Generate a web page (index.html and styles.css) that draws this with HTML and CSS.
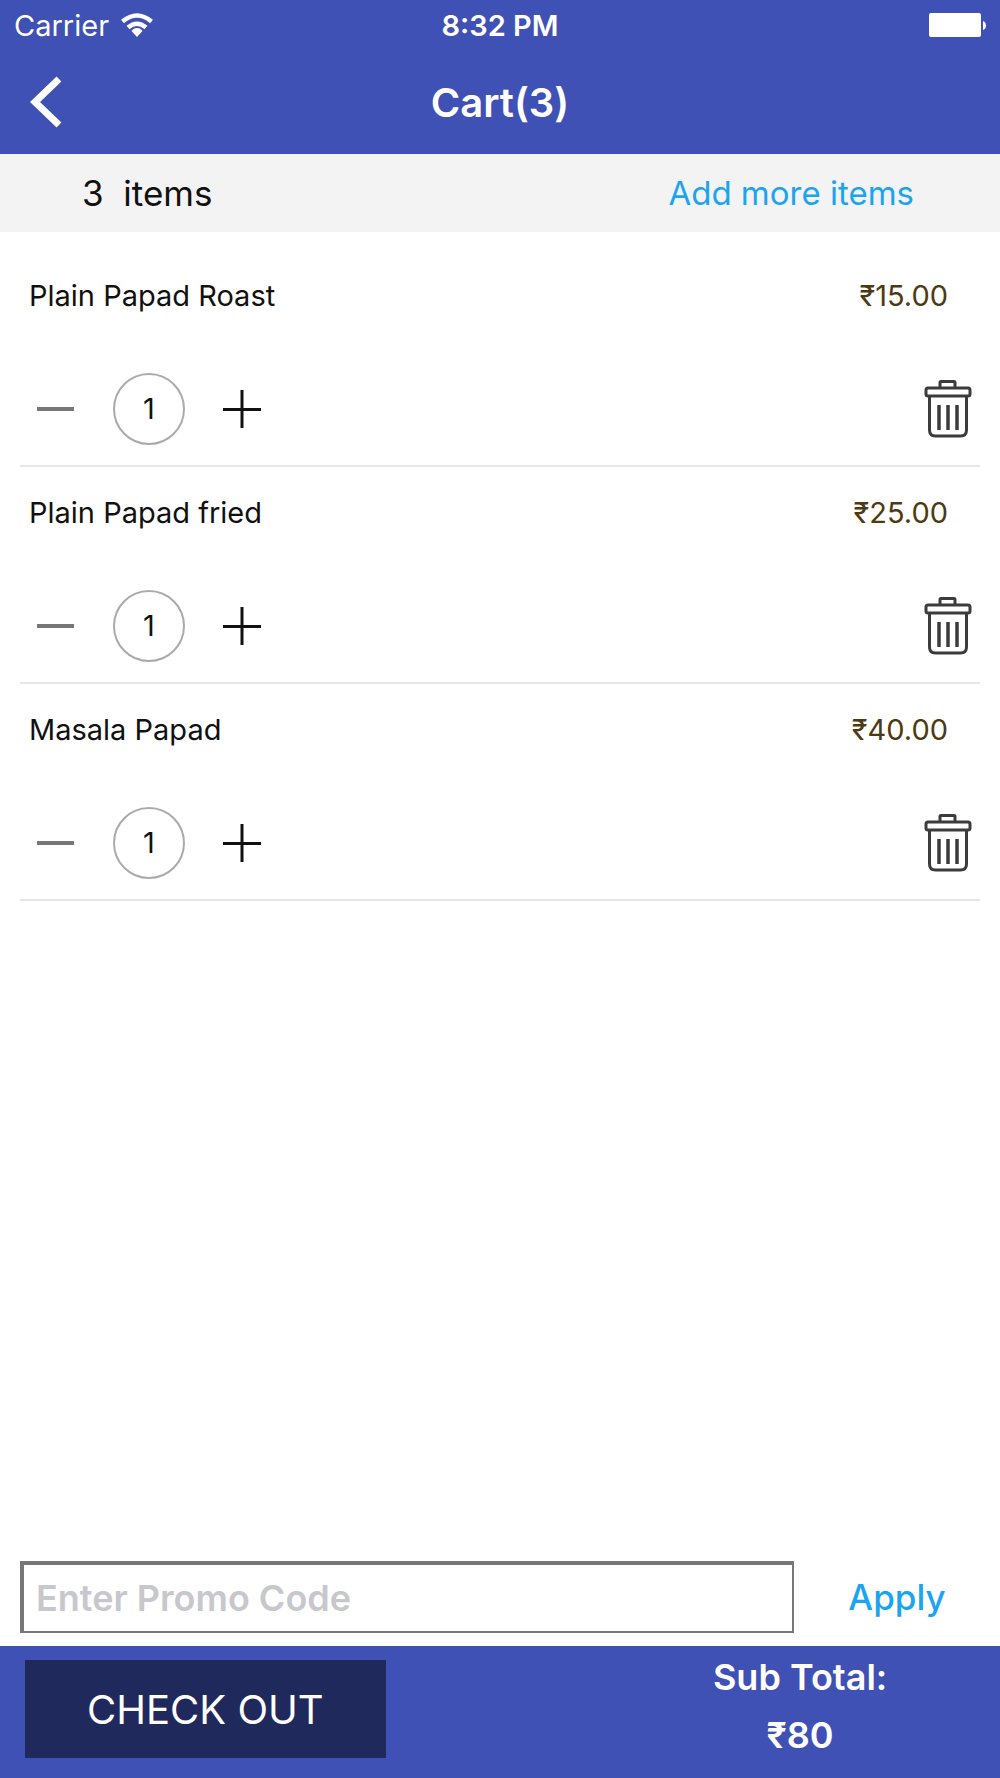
FILE: index.html
```html
<!DOCTYPE html>
<html lang="en">
<head>
  <meta charset="UTF-8">
  <meta name="viewport" content="width=device-width, initial-scale=1.0">
  <title>Cart</title>
  <link rel="stylesheet" href="styles.css">
</head>
<body>

  <!-- Trash icon shared by all cart rows -->
  <svg class="icon-defs" aria-hidden="true">
    <symbol id="trash" viewBox="0 0 48 60">
      <g fill="none" stroke="#3c3c3c" stroke-width="3">
        <path d="M16 9V3.500Q16 2.500 17 2.500H30Q31 2.500 31 3.500V9"/>
        <rect x="2" y="9" width="44" height="8" rx="2"/>
        <path d="M5.500 17V51Q5.500 57 11.500 57H36.500Q42.500 57 42.500 51V17"/>
        <path d="M15 26V51M24 26V51M33 26V51" stroke-width="3.500"/>
      </g>
    </symbol>
  </svg>

  <header class="header">
    <div class="status-bar">
      <div class="carrier">
        <span>Carrier</span>
        <svg class="wifi" viewBox="0 0 32 24" aria-hidden="true">
          <g fill="none" stroke="#fff" stroke-width="4.500">
            <path d="M1.500 8.500Q16 -3.500 30.500 8.500"/>
            <path d="M7 14.500Q16 7 25 14.500"/>
          </g>
          <path d="M16 15Q19.500 15 21.500 18L16 24L10.500 18Q12.500 15 16 15Z" fill="#fff"/>
        </svg>
      </div>
      <span class="time">8:32 PM</span>
      <div class="battery">
        <svg width="58" height="25" viewBox="0 0 58 25" aria-hidden="true">
          <rect x="1" y="0" width="52" height="24" rx="2" fill="#fff"/>
          <path d="M55 8Q58 9 58 12.500Q58 16 55 17Z" fill="#fff"/>
        </svg>
      </div>
    </div>
    <nav class="nav-bar">
      <button class="back-button" aria-label="Back">
        <svg width="34" height="52" viewBox="0 0 34 52" aria-hidden="true">
          <path d="M29 3L5 26L29 49" fill="none" stroke="#fff" stroke-width="7"/>
        </svg>
      </button>
      <h1>Cart(3)</h1>
    </nav>
  </header>

  <div class="items-bar">
    <span class="items-count">3  items</span>
    <a href="#" class="add-more">Add more items</a>
  </div>

  <ul class="cart-list">
    <li class="cart-item">
      <div class="item-info">
        <span class="item-name">Plain Papad Roast</span>
        <span class="item-price">₹15.00</span>
      </div>
      <div class="item-controls">
        <button class="qty-button" aria-label="Decrease">
          <svg width="38" height="38" viewBox="0 0 38 38"><path d="M0 19H37" stroke="#777" stroke-width="4"/></svg>
        </button>
        <span class="quantity">1</span>
        <button class="qty-button" aria-label="Increase">
          <svg width="38" height="38" viewBox="0 0 38 38"><path d="M0 19.500H38M19 0V38" stroke="#111" stroke-width="3"/></svg>
        </button>
        <button class="delete-button" aria-label="Delete">
          <svg width="48" height="60"><use href="#trash"/></svg>
        </button>
      </div>
    </li>
    <li class="cart-item">
      <div class="item-info">
        <span class="item-name">Plain Papad fried</span>
        <span class="item-price">₹25.00</span>
      </div>
      <div class="item-controls">
        <button class="qty-button" aria-label="Decrease">
          <svg width="38" height="38" viewBox="0 0 38 38"><path d="M0 19H37" stroke="#777" stroke-width="4"/></svg>
        </button>
        <span class="quantity">1</span>
        <button class="qty-button" aria-label="Increase">
          <svg width="38" height="38" viewBox="0 0 38 38"><path d="M0 19.500H38M19 0V38" stroke="#111" stroke-width="3"/></svg>
        </button>
        <button class="delete-button" aria-label="Delete">
          <svg width="48" height="60"><use href="#trash"/></svg>
        </button>
      </div>
    </li>
    <li class="cart-item">
      <div class="item-info">
        <span class="item-name">Masala Papad</span>
        <span class="item-price">₹40.00</span>
      </div>
      <div class="item-controls">
        <button class="qty-button" aria-label="Decrease">
          <svg width="38" height="38" viewBox="0 0 38 38"><path d="M0 19H37" stroke="#777" stroke-width="4"/></svg>
        </button>
        <span class="quantity">1</span>
        <button class="qty-button" aria-label="Increase">
          <svg width="38" height="38" viewBox="0 0 38 38"><path d="M0 19.500H38M19 0V38" stroke="#111" stroke-width="3"/></svg>
        </button>
        <button class="delete-button" aria-label="Delete">
          <svg width="48" height="60"><use href="#trash"/></svg>
        </button>
      </div>
    </li>
  </ul>

  <form class="promo">
    <input type="text" class="promo-input" placeholder="Enter Promo Code" aria-label="Enter Promo Code">
    <button type="button" class="apply-button">Apply</button>
  </form>

  <footer class="footer">
    <button class="checkout-button">CHECK OUT</button>
    <div class="sub-total">
      <span>Sub Total:</span>
      <span>₹80</span>
    </div>
  </footer>

</body>
</html>
```

FILE: styles.css
```css
* {
  box-sizing: border-box;
}

body {
  margin: 0;
  min-height: 100vh;
  display: flex;
  flex-direction: column;
  background-color: #fff;
  color: #111;
  font-family: Inter, Roboto, sans-serif;
}

button {
  padding: 0;
  border: none;
  background: none;
  font-family: inherit;
  cursor: pointer;
}

svg {
  display: block;
}

.icon-defs {
  display: none;
}

/* Header */
.header {
  background-color: #3f51b5;
  color: #fff;
}

.status-bar {
  display: grid;
  grid-template-columns: 1fr auto 1fr;
  align-items: center;
  height: 50px;
  padding: 0 14px;
  font-size: 29px;
}

.carrier {
  display: flex;
  align-items: center;
  gap: 12px;
}

.wifi {
  width: 32px;
  height: 24px;
}

.time {
  font-weight: 600;
}

.battery {
  justify-self: end;
}

.nav-bar {
  display: grid;
  grid-template-columns: 1fr auto 1fr;
  align-items: center;
  height: 104px;
  padding: 0 30px;
}

.back-button {
  justify-self: start;
}

h1 {
  margin: 0;
  font-size: 40px;
  font-weight: 600;
}

/* Items bar */
.items-bar {
  display: flex;
  justify-content: space-between;
  align-items: center;
  height: 78px;
  padding: 0 86px 0 82px;
  background-color: #f3f3f3;
}

.items-count {
  font-size: 35px;
  white-space: pre;
}

.add-more {
  color: #1ba4f0;
  font-size: 33px;
  text-decoration: none;
}

/* Cart list */
.cart-list {
  flex: 1;
  list-style-type: none;
  margin: 0;
  padding: 18px 20px;
}

.cart-item {
  padding: 28px 8px 20px 9px;
  border-bottom: 2px solid #e6e6e6;
}

.item-info {
  display: flex;
  justify-content: space-between;
  padding-right: 24px;
  font-size: 29px;
  line-height: 36px;
}

.item-price {
  color: #4d3a12;
}

.item-controls {
  display: flex;
  align-items: center;
  gap: 38px;
  margin-top: 59px;
  padding-left: 8px;
}

.quantity {
  width: 72px;
  height: 72px;
  border: 2px solid #aaa;
  border-radius: 50%;
  font-size: 29px;
  line-height: 68px;
  text-align: center;
}

.delete-button {
  margin-left: auto;
}

/* Promo code */
.promo {
  display: flex;
  padding: 0 0 13px 20px;
}

.promo-input {
  flex: 1;
  min-width: 0;
  height: 72px;
  padding: 0 12px;
  border: 2px solid #777;
  border-top-width: 4px;
  border-left-width: 4px;
  border-radius: 0;
  font-family: inherit;
  font-size: 36px;
  font-weight: 600;
}

.promo-input::placeholder {
  color: #c7c7cd;
}

.apply-button {
  width: 206px;
  color: #1ba4f0;
  font-size: 35px;
  font-weight: 500;
}

/* Footer */
.footer {
  display: flex;
  justify-content: space-between;
  align-items: flex-start;
  padding-left: 25px;
  background-color: #3f51b5;
  color: #fff;
}

.checkout-button {
  width: 37%;
  height: 98px;
  margin: 14px 0 20px;
  background-color: #20295c;
  color: #fff;
  font-size: 40px;
}

.sub-total {
  display: flex;
  flex-direction: column;
  width: 41%;
  padding-top: 2px;
  font-size: 36px;
  font-weight: 600;
  line-height: 58px;
  text-align: center;
}
```
